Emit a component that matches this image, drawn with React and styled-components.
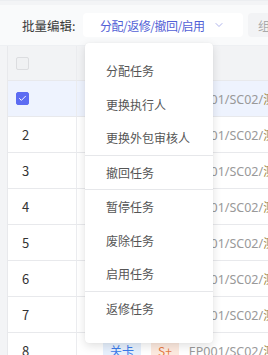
import React from "react";
import styled, { createGlobalStyle } from "styled-components";
import { ChevronDown, Check } from "lucide-react";

const GlobalStyle = createGlobalStyle`
  body {
    margin: 0;
    background: #f3f4f6;
    font-family: "Noto Sans CJK SC", "Noto Sans", sans-serif;
    overflow: hidden;
  }
`;

const menuGroups = [
  ["分配任务", "更换执行人", "更换外包审核人"],
  ["撤回任务"],
  ["暂停任务", "废除任务", "启用任务"],
  ["返修任务"],
];

const rows = ["sel", "2", "3", "4", "5", "6", "7", "8"];

const App = () => {
  return (
    <Page>
      <GlobalStyle />
      <Toolbar>
        <Label>批量编辑:</Label>
        <SelectBox>
          <SelectText>分配/返修/撤回/启用</SelectText>
          <ChevronDown size={12} color="#9aa0e6" strokeWidth={1.6} />
          <Dropdown>
            {menuGroups.map((group, gi) => (
              <Group key={gi} first={gi === 0}>
                {group.map((item) => (
                  <MenuItem key={item}>{item}</MenuItem>
                ))}
              </Group>
            ))}
          </Dropdown>
        </SelectBox>
        <OtherBox>组</OtherBox>
      </Toolbar>

      <Table>
        <HeaderRow>
          <FirstCell>
            <Box />
          </FirstCell>
          <BodyCell />
        </HeaderRow>
        {rows.map((r) => (
          <Row key={r} selected={r === "sel"}>
            <FirstCell number={r !== "sel"}>
              {r === "sel" ? (
                <Box checked>
                  <Check size={9} color="#fff" strokeWidth={2.5} />
                </Box>
              ) : (
                r
              )}
            </FirstCell>
            <BodyCell>
              <Tag kind="blue">关卡</Tag>
              <Tag kind="orange">S+</Tag>
              <Path>
                EP001/SC02/<Odd>测</Odd>试
              </Path>
            </BodyCell>
          </Row>
        ))}
      </Table>
    </Page>
  );
};

export default App;

const Page = styled.div`
  padding-top: 4px;
  width: 268px;
  height: 355px;
  box-sizing: border-box;
  border-top: 1px solid #eceef1;
`;

const Toolbar = styled.div`
  height: 40px;
  background: #f9fafb;
  display: flex;
  align-items: center;
  padding-left: 22px;
  border-bottom: 1px solid #eef0f3;
`;

const Label = styled.span`
  flex: none;
  font-size: 12.5px;
  color: #3a3a3a;
  width: 61px;
`;

const SelectBox = styled.div`
  position: relative;
  width: 160px;
  flex: none;
  height: 24px;
  box-sizing: border-box;
  background: #fff;
  border-radius: 4px;
  display: flex;
  align-items: center;
  padding-left: 17px;
  gap: 8px;
`;

const SelectText = styled.span`
  font-size: 12px;
  letter-spacing: -0.5px;
  color: #5260d6;
  white-space: nowrap;
`;

const OtherBox = styled.div`
  margin-left: 5px;
  height: 24px;
  flex: 1;
  background: #f2f3f5;
  border-radius: 4px 0 0 4px;
  display: flex;
  align-items: center;
  padding-left: 10px;
  font-size: 12.5px;
  color: #aaa;
`;

const Dropdown = styled.div`
  position: absolute;
  left: 2px;
  top: 30px;
  width: 128px;
  height: 300px;
  box-sizing: border-box;
  background: #fff;
  border-radius: 4px;
  box-shadow: 0 3px 10px rgba(0, 0, 0, 0.12), 0 0 1px rgba(0, 0, 0, 0.08);
  padding-top: 11px;
  z-index: 10;
`;

const Group = styled.div`
  border-top: ${(p) => (p.first ? "none" : "1px solid #e6e7ea")};
`;

const MenuItem = styled.div`
  height: 33.5px;
  display: flex;
  align-items: center;
  padding-left: 21px;
  font-size: 12px;
  color: #555;
`;

const Table = styled.div`
  margin-left: 7px;
  background: #fff;
  border-left: 1px solid #e8e9ec;
`;

const HeaderRow = styled.div`
  height: 35px;
  background: #f2f3f5;
  display: flex;
  border-bottom: 1px solid #e8e9ec;
  box-sizing: border-box;
`;

const Row = styled.div`
  height: 36px;
  box-sizing: border-box;
  display: flex;
  background: ${(p) => (p.selected ? "#eef3fe" : "#fff")};
  border-bottom: 1px solid #e8e9ec;
`;

const FirstCell = styled.div`
  width: 69px;
  flex: none;
  box-sizing: border-box;
  display: flex;
  align-items: center;
  padding-left: ${(p) => (p.number ? "14px" : "8px")};
  border-right: 1px solid #ebecef;
  font-size: 13px;
  color: #333;
`;

const BodyCell = styled.div`
  flex: 1;
  min-width: 0;
  display: flex;
  align-items: center;
  padding-left: 26px;
  gap: 7px;
  overflow: hidden;
  white-space: nowrap;
`;

const Box = styled.span`
  width: 13px;
  height: 13px;
  box-sizing: border-box;
  border-radius: 2px;
  display: flex;
  align-items: center;
  justify-content: center;
  background: ${(p) => (p.checked ? "#5c6cf2" : "#f0f1f3")};
  border: 1px solid ${(p) => (p.checked ? "#5c6cf2" : "#dcdde0")};
`;

const Tag = styled.span`
  flex: none;
  height: 20px;
  padding: 0 7px;
  display: flex;
  align-items: center;
  font-size: 12px;
  border-radius: 2px;
  background: ${(p) => (p.kind === "blue" ? "#e6f0fd" : "#fdeadf")};
  color: ${(p) => (p.kind === "blue" ? "#3c7bea" : "#e77a45")};
  margin-right: ${(p) => (p.kind === "blue" ? "3px" : "0")};
`;

const Path = styled.span`
  margin-left: 3px;
  font-family: "Noto Sans", sans-serif;
  font-size: 12.5px;
  color: #999;
`;

const Odd = styled.span`
  color: #a48a4c;
  font-family: "Noto Sans CJK SC", sans-serif;
`;
